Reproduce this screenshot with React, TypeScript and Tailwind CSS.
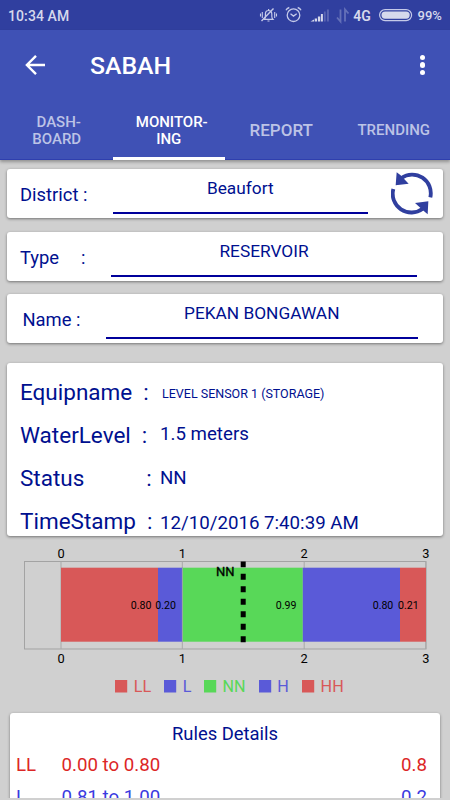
import React from 'react';

const TABS = [
  { lines: ['DASH-', 'BOARD'], className: 'text-[15px] pl-[1px]', firstLine: 'pl-[4px]' },
  { lines: ['MONITOR-', 'ING'], className: 'text-[15px]', firstLine: 'pl-[6px]', active: true },
  { lines: ['REPORT'], className: 'text-[17px]', firstLine: '' },
  { lines: ['TRENDING'], className: 'text-[15px]', firstLine: '' },
];

const READINGS = [
  { label: 'Equipname', gap: 'ml-[11px]', value: 'LEVEL SENSOR 1 (STORAGE)', pad: 'left-[155px]', valueClass: 'text-[12.5px] mt-[1px]' },
  { label: 'WaterLevel', gap: 'ml-[11px]', value: '1.5 meters', pad: 'left-[153px]', valueClass: 'text-[18.7px] -mt-[1px]' },
  { label: 'Status', gap: 'ml-[62px]', value: 'NN', pad: 'left-[153px]', valueClass: 'text-[18.7px]' },
  { label: 'TimeStamp', gap: 'ml-[11px]', value: '12/10/2016 7:40:39 AM', pad: 'left-[153px]', valueClass: 'text-[18.7px] mt-[1.5px]' },
];

const SEGMENTS = [
  { x: 61, end: 158, color: '#d85858', label: '0.80', labelX: 141.2 },
  { x: 158, end: 182.4, color: '#5a5ad8', label: '0.20', labelX: 165.7 },
  { x: 182.4, end: 302.8, color: '#58d858', label: '0.99', labelX: 286.2 },
  { x: 302.8, end: 400, color: '#5a5ad8', label: '0.80', labelX: 383 },
  { x: 400, end: 426, color: '#d85858', label: '0.21', labelX: 408.3 },
];

const TICKS = [61, 182.3, 304.2, 425.8];

const LEGEND = [
  { x: 115, textX: 133.7, name: 'LL', color: '#d85858' },
  { x: 164, textX: 182.7, name: 'L', color: '#5a5ad8' },
  { x: 204, textX: 222.5, name: 'NN', color: '#58d858' },
  { x: 259, textX: 277.3, name: 'H', color: '#5a5ad8' },
  { x: 302, textX: 320.6, name: 'HH', color: '#d85858' },
];

const RULES = [
  { name: 'LL', range: '0.00 to 0.80', value: '0.8', className: 'text-[#dc2626]' },
  { name: 'L', range: '0.81 to 1.00', value: '0.2', className: 'text-[#3a3ae0]' },
];

const StatusBar: React.FC = () => (
  <div className="h-[30px] bg-[#303f9f] flex items-center justify-between pl-2 text-[#d6d9ec] font-medium">
    <span className="text-[14px] leading-[30px] mt-[1px] tracking-[0.1px]">10:34 AM</span>
    <svg width="191" height="30" viewBox="259 0 191 30" fill="none" stroke="#c5cae9">
      {/* Silent bell */}
      <path d="M264.500 19.300h8.500q-1.200-1.200-1.200-3v-2.300a3.200 3.500 0 0 0-6.400 0v2.300q0 1.800-.9 3z M267.500 21h2 M268.600 9v1.500" strokeWidth="1.200" />
      <path d="M261.500 21 273.500 8.500" strokeWidth="1.400" />
      <path d="M262.300 12v6 M260.500 13.500v3 M274.700 12v6 M276.500 13.500v3" strokeWidth="1.100" />
      {/* Alarm */}
      <circle cx="293.500" cy="15.200" r="6.300" strokeWidth="1.300" />
      <path d="m290.500 13.800 3 2.300 3.200-2.300M286 10.200q.8-2 3.300-2.700M301 10.200q-.8-2-3.300-2.700" strokeWidth="1.300" />
      {/* Signal */}
      <g stroke="none" fill="#d6d9ec">
        <path d="M310.500 21.500l3.500-2v2zM314.700 18.500h2.300v3h-2.300zM317.900 16.500h2.300v5h-2.300zM320.900 14h2v7.500h-2z" />
        <path d="M323.900 11.500h1.800v10h-1.800zM326.900 9.500h2v12h-2z" opacity=".25" />
      </g>
      <path d="M340.500 9.500v12l-3.500-4M345 21.500v-12l3.500 4" strokeWidth="1.800" opacity=".35" />
      <text x="353.300" y="20.500" fontSize="14" fontWeight="600" fill="#d6d9ec" stroke="none">4G</text>
      <rect x="379.600" y="9.600" width="32" height="11" rx="5.500" strokeWidth="1.200" />
      <rect x="381.500" y="11.500" width="28.200" height="7.200" rx="3.600" fill="#d6d9ec" stroke="none" />
      <text x="417.600" y="20.200" fontSize="13" fontWeight="500" fill="#d6d9ec" stroke="none">99%</text>
    </svg>
  </div>
);

const AppBar: React.FC = () => (
  <header className="h-[130px] bg-[#3f51b5] shadow-[0_2px_3px_rgba(0,0,0,0.3)] text-white font-medium flex flex-col">
    <div className="h-[70px] flex items-center">
      <svg width="20" height="20" viewBox="0 0 20 20" className="ml-[25px]" fill="none" stroke="currentColor" strokeWidth="2.400">
        <path d="M20 10H2.200M11 .9 1.900 10l9.100 9.100" />
      </svg>
      <h1 className="ml-[45px] text-[24.8px] leading-[70px] mt-[2px]">SABAH</h1>
      <div className="ml-auto mr-[24.500px] w-[6px] flex flex-col gap-[1.800px]">
        <span className="size-[5.700px] rounded-full bg-white" />
        <span className="size-[5.700px] rounded-full bg-white" />
        <span className="size-[5.700px] rounded-full bg-white" />
      </div>
    </div>
    <nav className="h-[60px] grid grid-cols-4 border-b border-[#2f3fae]">
      {TABS.map((tab) => (
        <div
          key={tab.lines.join('')}
          className={`flex flex-col items-center justify-center leading-[17.500px] pt-[5px] text-center border-b-[3px] -mb-[1px] ${tab.className} ${
            tab.active ? 'text-white border-white' : 'text-[#bcc3e6] border-transparent'
          }`}
        >
          {tab.lines.map((line, i) => (
            <span key={line} className={i === 0 ? tab.firstLine : ''}>{line}</span>
          ))}
        </div>
      ))}
    </nav>
  </header>
);

const Card: React.FC<{ className?: string; children: React.ReactNode }> = ({ className = '', children }) => (
  <section className={`bg-white rounded-[3px] shadow-[0_1px_3px_rgba(0,0,0,0.45)] ${className}`}>{children}</section>
);

const Field: React.FC<{ label: React.ReactNode; labelClass: string; value: string; valueClass: string; children?: React.ReactNode }> = ({
  label,
  labelClass,
  value,
  valueClass,
  children,
}) => (
  <Card className="h-[49px] flex">
    <div className={`shrink-0 text-[18.400px] leading-[51px] ${labelClass}`}>{label}</div>
    <div className={`h-[45px] shrink-0 border-b-2 border-[#00009b] text-center text-[17.300px] leading-[39px] ${valueClass}`}>{value}</div>
    {children}
  </Card>
);

const RefreshIcon: React.FC = () => (
  <svg width="42" height="43" viewBox="496 37 126 129" className="ml-[23px] mt-[3px] shrink-0">
    <g fill="none" stroke="#303f9f" strokeWidth="11.500">
      <path d="M527 55A56 56 0 0 1 614 113" />
      <path d="M503 88A56 56 0 0 0 591 147" />
    </g>
    <path d="M513 38 524 46 549 72 510 77zM608 125 606 164 597 156 568 130z" fill="#303f9f" />
  </svg>
);

const LevelChart: React.FC = () => (
  <svg width="450" height="164" viewBox="0 541 450 164" className="block">
    <rect x="24.500" y="561.500" width="401.500" height="87.500" fill="none" stroke="#a3a3a3" />
    {TICKS.map((x) => (
      <path key={x} d={`M${x} 561.500V649`} stroke="#a8a8a8" />
    ))}
    {SEGMENTS.map((s) => (
      <rect key={s.x} x={s.x} y="567.700" width={s.end - s.x} height="74" fill={s.color} />
    ))}
    <path d="M182.400 567.700v74" stroke="#9aa8a0" />
    <g fontSize="10.600" textAnchor="middle" fill="#000">
      {SEGMENTS.map((s) => (
        <text key={s.x} x={s.labelX} y="609.400">{s.label}</text>
      ))}
    </g>
    <path d="M243.200 561.500V642.500" stroke="#000" strokeWidth="5" strokeDasharray="6 6.500" strokeDashoffset=".3" />
    <text x="216" y="575.700" fontSize="13" stroke="#000" strokeWidth=".3">NN</text>
    <g fontSize="12.800" textAnchor="middle">
      {TICKS.map((x, i) => (
        <React.Fragment key={x}>
          <text x={x} y="558">{i}</text>
          <text x={x} y="663">{i}</text>
        </React.Fragment>
      ))}
    </g>
    {LEGEND.map((item) => (
      <g key={item.name} fill={item.color}>
        <rect x={item.x} y="680" width="12.200" height="12.500" />
        <text x={item.textX} y="692.400" fontSize="16.200">{item.name}</text>
      </g>
    ))}
  </svg>
);

const App: React.FC = () => (
  <div className="w-[450px] h-[800px] overflow-hidden bg-[#d0d0d0] text-[#00108f] font-['Roboto',sans-serif] flex flex-col whitespace-pre">
    <StatusBar />
    <AppBar />

    <div className="mt-[9px] mx-[7px] flex flex-col gap-[13.500px] shrink-0">
      <Field label="District :" labelClass="w-[106px] pl-[13px]" value="Beaufort" valueClass="w-[254.500px]">
        <RefreshIcon />
      </Field>
      <Field
        label={<><span>Type</span><span className="ml-[22px]">:</span></>}
        labelClass="w-[104px] pl-[13px]"
        value="RESERVOIR"
        valueClass="w-[306px]"
      />
      <Field label="Name :" labelClass="w-[99px] pl-[15.500px]" value="PEKAN BONGAWAN" valueClass="w-[311.500px]" />
    </div>

    <Card className="mt-[20px] mx-[7px] h-[173px] pt-[8px] shrink-0 overflow-hidden">
      {READINGS.map((row) => (
        <div key={row.label} className="relative h-[43px] flex leading-[43px] pl-[13px] text-[22.500px]">
          <span>{row.label}</span>
          <span className={row.gap}>:</span>
          <span className={`absolute top-0 ${row.pad} ${row.valueClass}`}>{row.value}</span>
        </div>
      ))}
    </Card>

    <div className="mt-[5px] shrink-0">
      <LevelChart />
    </div>

    <div className="h-[92.500px] shrink-0 overflow-hidden pt-[8px] px-[10px]">
      <Card className="h-[120px] pt-[4px]">
        <h2 className="text-center text-[18.400px] leading-[33px]">Rules Details</h2>
        {RULES.map((rule) => (
          <div key={rule.name} className={`flex h-[32px] leading-[31px] text-[18.700px] pl-[6px] pr-[13px] ${rule.className}`}>
            <span className="w-[45.500px]">{rule.name}</span>
            <span>{rule.range}</span>
            <span className="ml-auto">{rule.value}</span>
          </div>
        ))}
      </Card>
    </div>
  </div>
);

export default App;
